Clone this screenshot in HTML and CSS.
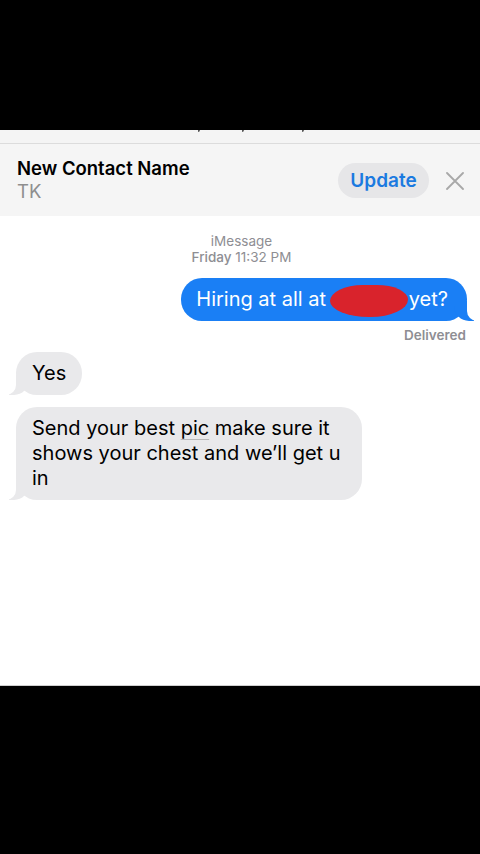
FILE: index.html
```html
<!DOCTYPE html>
<html>
<head>
<meta charset="utf-8">
<link rel="stylesheet" href="styles.css">
</head>
<body>
<div class="top-black"></div>
<div class="screen">
  <div class="strip">
    <span class="tick t1"></span>
    <span class="tick t2"></span>
    <span class="tick t3"></span>
  </div>
  <div class="header">
    <div class="contact">
      <div class="name">New Contact Name</div>
      <div class="sub">TK</div>
    </div>
    <div class="actions">
      <div class="update">Update</div>
      <svg class="close" width="18" height="18" viewBox="0 0 18 18"><path d="M1 1L17 17M17 1L1 17" stroke="#a8a8a8" stroke-width="1.8" fill="none" stroke-linecap="round"/></svg>
    </div>
  </div>
  <div class="thread">
    <div class="meta">
      <div>iMessage</div>
      <div><span class="day">Friday</span> 11:32 PM</div>
    </div>
    <div class="row right">
      <div class="bubble sent">Hiring at all at <span class="redact"></span>yet?</div>
    </div>
    <div class="delivered">Delivered</div>
    <div class="row left">
      <div class="bubble recv">Yes</div>
    </div>
    <div class="row left gap">
      <div class="bubble recv wide">Send your best <span class="link">pic</span> make sure it shows your chest and we’ll get u in</div>
    </div>
  </div>
</div>
<div class="bottom-black"></div>
</body>
</html>
```
FILE: styles.css
```css
html, body {
  margin: 0;
  padding: 0;
  background: #000;
  font-family: "Inter", "Liberation Sans", sans-serif;
}
.top-black { height: 130px; background: #000; }
.screen {
  height: 555px;
  background: #fff;
  border-bottom: 1px solid #cfcfcf;
}
.strip {
  height: 13px;
  background: #f4f4f4;
  border-bottom: 1px solid #dcdcdc;
  position: relative;
}
.tick {
  width: 2px;
  height: 2px;
  background: #555;
  position: absolute;
  top: 0;
  border-radius: 0 0 2px 0;
}
.t1 { left: 198px; }
.t2 { left: 242px; }
.t3 { left: 302px; }
.header {
  height: 72px;
  background: #f5f5f5;
  display: flex;
  align-items: center;
  justify-content: space-between;
  padding: 0 16px 0 17px;
}
.contact { margin-top: -1px; }
.name {
  font-size: 18.5px;
  font-weight: 600;
  color: #000;
  line-height: 23px;
}
.sub {
  font-size: 18.5px;
  color: #8e8e8e;
  line-height: 23px;
}
.actions {
  display: flex;
  align-items: center;
  gap: 17px;
  margin-top: 1px;
}
.update {
  width: 91px;
  height: 35px;
  border-radius: 18px;
  background: #e6e6e8;
  color: #1b7ae0;
  font-size: 19px;
  font-weight: 600;
  display: flex;
  align-items: center;
  justify-content: center;
}
.close { display: block; }
.thread {
  padding: 17px 0 0;
}
.meta {
  text-align: center;
  color: #8e8e93;
  font-size: 13.5px;
  line-height: 16px;
  margin-left: 3px;
}
.day { font-weight: 500; }
.row { display: flex; }
.row.right { justify-content: flex-end; padding-right: 13px; margin-top: 13px; }
.row.left { justify-content: flex-start; padding-left: 16px; }
.row.gap { margin-top: 12px; }
.bubble {
  position: relative;
  font-size: 20px;
  line-height: 25px;
  padding: 9px 16px;
  border-radius: 21px;
}
.sent {
  background: #1a7ff5;
  color: #fff;
  padding: 9px 19px 9px 15px;
}
.recv {
  background: #e9e9eb;
  color: #000;
}
.wide { max-width: 314px; }
.sent::before {
  content: "";
  position: absolute;
  bottom: 0;
  right: -7px;
  width: 20px;
  height: 20px;
  background: #1a7ff5;
  border-bottom-left-radius: 15px;
}
.sent::after {
  content: "";
  position: absolute;
  bottom: 0;
  right: -10px;
  width: 10px;
  height: 20px;
  background: #fff;
  border-bottom-left-radius: 10px;
}
.recv::before {
  content: "";
  position: absolute;
  bottom: 0;
  left: -7px;
  width: 20px;
  height: 20px;
  background: #e9e9eb;
  border-bottom-right-radius: 15px;
}
.recv::after {
  content: "";
  position: absolute;
  bottom: 0;
  left: -10px;
  width: 10px;
  height: 20px;
  background: #fff;
  border-bottom-right-radius: 10px;
}
.redact {
  display: inline-block;
  width: 79px;
  height: 10px;
  position: relative;
  margin-left: -2px;
}
.redact::after {
  content: "";
  position: absolute;
  left: 0;
  top: -11px;
  width: 78px;
  height: 32px;
  background: #d9232c;
  border-radius: 42% 40% 48% 50% / 50% 45% 55% 50%;
}
.link {
  text-decoration: underline;
  text-decoration-color: #b8b8b8;
  text-decoration-thickness: 1px;
  text-underline-offset: 4px;
}
.delivered {
  text-align: right;
  padding-right: 14px;
  color: #8e8e93;
  font-size: 13.5px;
  font-weight: 600;
  line-height: 16px;
  margin-top: 6px;
  margin-bottom: 9px;
}
.bottom-black { height: 168px; background: #000; }
```
